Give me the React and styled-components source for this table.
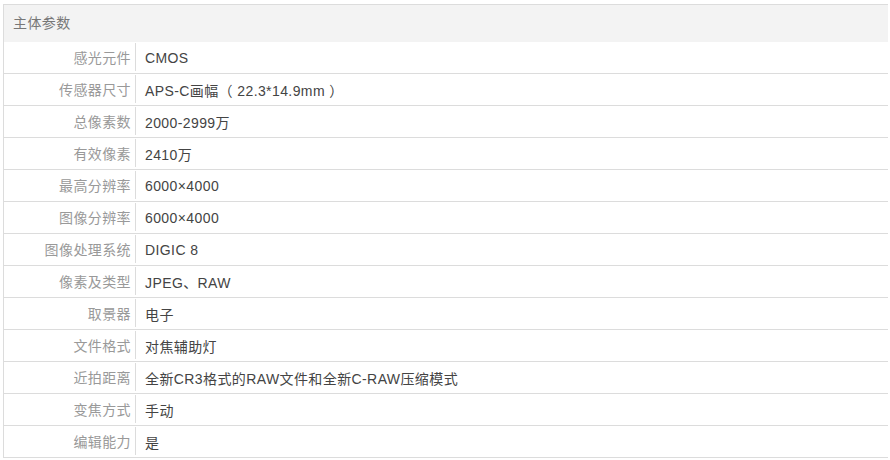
import React from 'react';
import styled, { createGlobalStyle } from 'styled-components';

const GlobalStyle = createGlobalStyle`
	body {
		margin: 0;
		background: #fff;
		font-family: "Liberation Sans", Arial, "Noto Sans CJK SC", sans-serif;
		letter-spacing: 0.4px;
	}
`;

const ParamTable = styled.div`
	margin: 4px 3px 0;
	width: 884px;
	border-top: 1px solid #dcdcdc;
	border-left: 1px solid #dcdcdc;
`;

const TableHeader = styled.div`
	height: 37px;
	line-height: 37px;
	padding-left: 9px;
	background: #f3f3f3;
	color: #777;
	font-size: 14px;
`;

const Row = styled.div`
	display: flex;
	height: 31px;
	border-bottom: 1px solid #dcdcdc;
	font-size: 14px;
`;

const Label = styled.div`
	width: 127px;
	margin: 1px 0 2px;
	padding-right: 4px;
	border-right: 1px solid #dcdcdc;
	display: flex;
	align-items: center;
	justify-content: flex-end;
	color: #999;
`;

const Value = styled.div`
	flex: 1;
	display: flex;
	align-items: center;
	padding-left: 9px;
	color: #444;
`;

const params = [
	['感光元件', 'CMOS'],
	['传感器尺寸', 'APS-C画幅（ 22.3*14.9mm ）'],
	['总像素数', '2000-2999万'],
	['有效像素', '2410万'],
	['最高分辨率', '6000×4000'],
	['图像分辨率', '6000×4000'],
	['图像处理系统', 'DIGIC 8'],
	['像素及类型', 'JPEG、RAW'],
	['取景器', '电子'],
	['文件格式', '对焦辅助灯'],
	['近拍距离', '全新CR3格式的RAW文件和全新C-RAW压缩模式'],
	['变焦方式', '手动'],
	['编辑能力', '是'],
];

const App = () => {
	return (
		<>
			<GlobalStyle />
			<ParamTable>
				<TableHeader>主体参数</TableHeader>
				{params.map(([label, value]) => (
					<Row key={label}>
						<Label>{label}</Label>
						<Value>{value}</Value>
					</Row>
				))}
			</ParamTable>
		</>
	);
};

export default App;
